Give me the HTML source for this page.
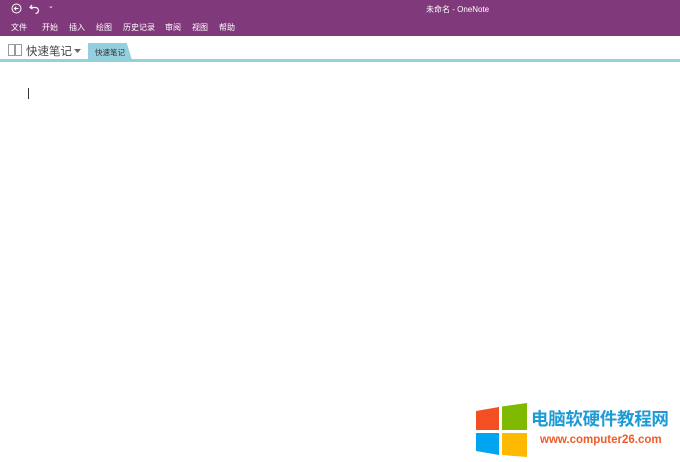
<!DOCTYPE html>
<html><head><meta charset="utf-8"><style>
*{margin:0;padding:0;box-sizing:border-box}
body{width:680px;height:462px;overflow:hidden;background:#fff;font-family:"Liberation Sans","Noto Sans CJK SC",sans-serif;position:relative}
.top{position:absolute;left:0;top:0;width:680px;height:36px;background:#80397b;color:#fff}
.menu{position:absolute;top:22px;font-size:8px;color:#fff}
.title{position:absolute;left:426px;top:4px;font-size:8px;color:#fff}
.ic{position:absolute;color:#fff;font-size:10px}
.nb{position:absolute;left:26px;top:43px;font-size:11.5px;color:#444}
.tab{position:absolute;left:88px;top:43px;width:44px;height:17px;background:#93cfdc;font-size:7.5px;color:#333;padding:4px 0 0 7px;clip-path:polygon(0 0,88% 0,100% 100%,0 100%)}
.line{position:absolute;left:0;top:59px;width:680px;height:3px;background:#93cfdc}
.cur{position:absolute;left:28px;top:88px;width:1px;height:11px;background:#333}
.sq{position:absolute}
.brand{position:absolute;left:531px;top:406px;font-size:17.5px;font-weight:bold;color:#1e9ad6;letter-spacing:-0.3px;white-space:nowrap}
.url{position:absolute;left:540px;top:434px;font-size:11.5px;font-weight:bold;color:#f05a28;white-space:nowrap}
</style></head><body>
<div class="top">
<svg class="ic" style="left:11px;top:3px" width="11" height="11" viewBox="0 0 11 11"><circle cx="5.5" cy="5.5" r="4.5" fill="none" stroke="#fff" stroke-width="1"/><path d="M7.5 5.5H3.5M5.2 3.7L3.4 5.5 5.2 7.3" fill="none" stroke="#fff" stroke-width="1"/></svg>
<svg class="ic" style="left:29px;top:3px" width="11" height="11" viewBox="0 0 11 11"><path d="M3 2L1 4.5 3.5 6M1.5 4.5H6.5A3 3 0 0 1 6.5 10.5" fill="none" stroke="#fff" stroke-width="1.2"/></svg>
<div class="ic" style="left:48px;top:2px;font-size:7px">⌄</div>
<div class="title">未命名 - OneNote</div>
<div class="menu" style="left:11px">文件</div>
<div class="menu" style="left:42px">开始</div>
<div class="menu" style="left:69px">插入</div>
<div class="menu" style="left:96px">绘图</div>
<div class="menu" style="left:123px">历史记录</div>
<div class="menu" style="left:165px">审阅</div>
<div class="menu" style="left:192px">视图</div>
<div class="menu" style="left:219px">帮助</div>
</div>
<svg style="position:absolute;left:8px;top:44px" width="14" height="12" viewBox="0 0 14 12"><path d="M0.5 0.5H6.5V11.5H0.5ZM7.5 0.5H13.5V11.5H7.5Z" fill="none" stroke="#999" stroke-width="1"/></svg>
<div class="nb">快速笔记</div>
<svg style="position:absolute;left:74px;top:49px" width="7" height="4"><path d="M0 0H7L3.5 4Z" fill="#666"/></svg>
<div class="tab">快速笔记</div>
<div class="line"></div>
<div class="cur"></div>
<svg class="sq" style="left:475px;top:403px" width="53" height="54" viewBox="0 0 53 54">
<path d="M1 8L24 4V27H1Z" fill="#f25022"/>
<path d="M27 3.5L52 0V27H27Z" fill="#7fba00"/>
<path d="M1 30H24V52L1 48Z" fill="#00a4ef"/>
<path d="M27 30H52V54L27 52Z" fill="#ffb900"/>
</svg>
<div class="brand">电脑软硬件教程网</div>
<div class="url">www.computer26.com</div>
</body></html>
